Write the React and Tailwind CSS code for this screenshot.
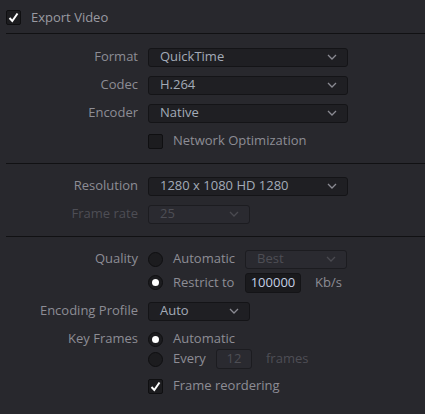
const font = { fontFamily: '"Open Sans", "Noto Sans", sans-serif' };

function Chevron({ dim }) {
  return (
    <svg width="10" height="6" viewBox="0 0 10 6" className="shrink-0">
      <path d="M1 1l4 4 4-4" fill="none" stroke={dim ? '#4a4a50' : '#8a8a92'} strokeWidth="1.3" />
    </svg>
  );
}

function Select({ value, width = 'w-[200px]', disabled }) {
  return (
    <div
      className={`${width} h-[19px] flex items-center justify-between pl-[11px] pr-[10px] rounded-[3px] border ${
        disabled ? 'border-[#1c1c20] bg-[#2a2a30] text-[#4e4e55]' : 'border-[#141417] bg-[#1f1f23] text-[#a3abb8]'
      }`}
    >
      <span>{value}</span>
      <Chevron dim={disabled} />
    </div>
  );
}

function Check({ checked }) {
  return (
    <div className="w-[15px] h-[15px] rounded-[2px] border border-[#0f0f11] bg-[#1c1c1f] flex items-center justify-center shrink-0">
      {checked && (
        <svg width="11" height="11" viewBox="0 0 11 11">
          <path d="M1.5 6l2.8 3L9.5 1.5" fill="none" stroke="#fff" strokeWidth="2" />
        </svg>
      )}
    </div>
  );
}

function Radio({ checked }) {
  return (
    <div className="w-[15px] h-[15px] rounded-full border border-[#0f0f11] bg-[#1c1c1f] flex items-center justify-center shrink-0">
      {checked && <div className="w-[7px] h-[7px] rounded-full bg-white" />}
    </div>
  );
}

function Row({ label, h = 'h-[28px]', dim, children }) {
  return (
    <div className={`flex items-center ${h}`}>
      <div className={`w-[138px] text-right ${dim ? 'text-[#4e4e55]' : 'text-[#8d8d95]'}`}>{label}</div>
      <div className="ml-[10px] flex items-center">{children}</div>
    </div>
  );
}

function Sep() {
  return <div className="ml-[6px] h-px bg-[#111113]" />;
}

export default function App() {
  return (
    <div className="w-[425px] h-[414px] bg-[#28282d] text-[13px] overflow-hidden" style={font}>
      <div className="h-[33px] pl-[6px] pt-[10px] flex items-start">
        <Check checked />
        <span className="ml-[10px] text-[#9a9aa2] leading-[15px]">Export Video</span>
      </div>
      <Sep />
      <div className="pt-[9px] pb-[8px]">
        <Row label="Format"><Select value="QuickTime" /></Row>
        <Row label="Codec"><Select value="H.264" /></Row>
        <Row label="Encoder"><Select value="Native" /></Row>
        <Row label="">
          <Check />
          <span className="ml-[10px] text-[#8d8d95]">Network Optimization</span>
        </Row>
      </div>
      <Sep />
      <div className="pt-[8px] pb-[8px]">
        <Row label="Resolution"><Select value="1280 x 1080 HD 1280" /></Row>
        <Row label="Frame rate" dim><Select value="25" width="w-[102px]" disabled /></Row>
      </div>
      <Sep />
      <div className="pt-[11px]">
        <Row label="Quality" h="h-[22px]">
          <Radio />
          <span className="ml-[10px] w-[72px] text-[#8d8d95]">Automatic</span>
          <Select value="Best" width="w-[102px]" disabled />
        </Row>
        <Row label="" h="h-[25px]">
          <Radio checked />
          <span className="ml-[10px] w-[72px] text-[#8d8d95]">Restrict to</span>
          <div className="w-[56px] h-[20px] rounded-[3px] border border-[#141417] bg-[#1a1a1d] text-[#c4d0e4] flex items-center justify-center">
            100000
          </div>
          <span className="ml-[14px] text-[#8d8d95]">Kb/s</span>
        </Row>
        <Row label="Encoding Profile" h="h-[32px]"><Select value="Auto" width="w-[102px]" /></Row>
        <Row label="Key Frames" h="h-[24px]">
          <Radio checked />
          <span className="ml-[10px] text-[#8d8d95]">Automatic</span>
        </Row>
        <Row label="" h="h-[16px]">
          <Radio />
          <span className="ml-[10px] w-[43px] text-[#8d8d95]">Every</span>
          <div className="w-[36px] h-[20px] rounded-[3px] border border-[#1c1c20] bg-[#2a2a30] text-[#4e4e55] flex items-center justify-center">
            12
          </div>
          <span className="ml-[14px] text-[#4e4e55]">frames</span>
        </Row>
        <Row label="" h="h-[38px]">
          <Check checked />
          <span className="ml-[10px] text-[#8d8d95]">Frame reordering</span>
        </Row>
      </div>
    </div>
  );
}
